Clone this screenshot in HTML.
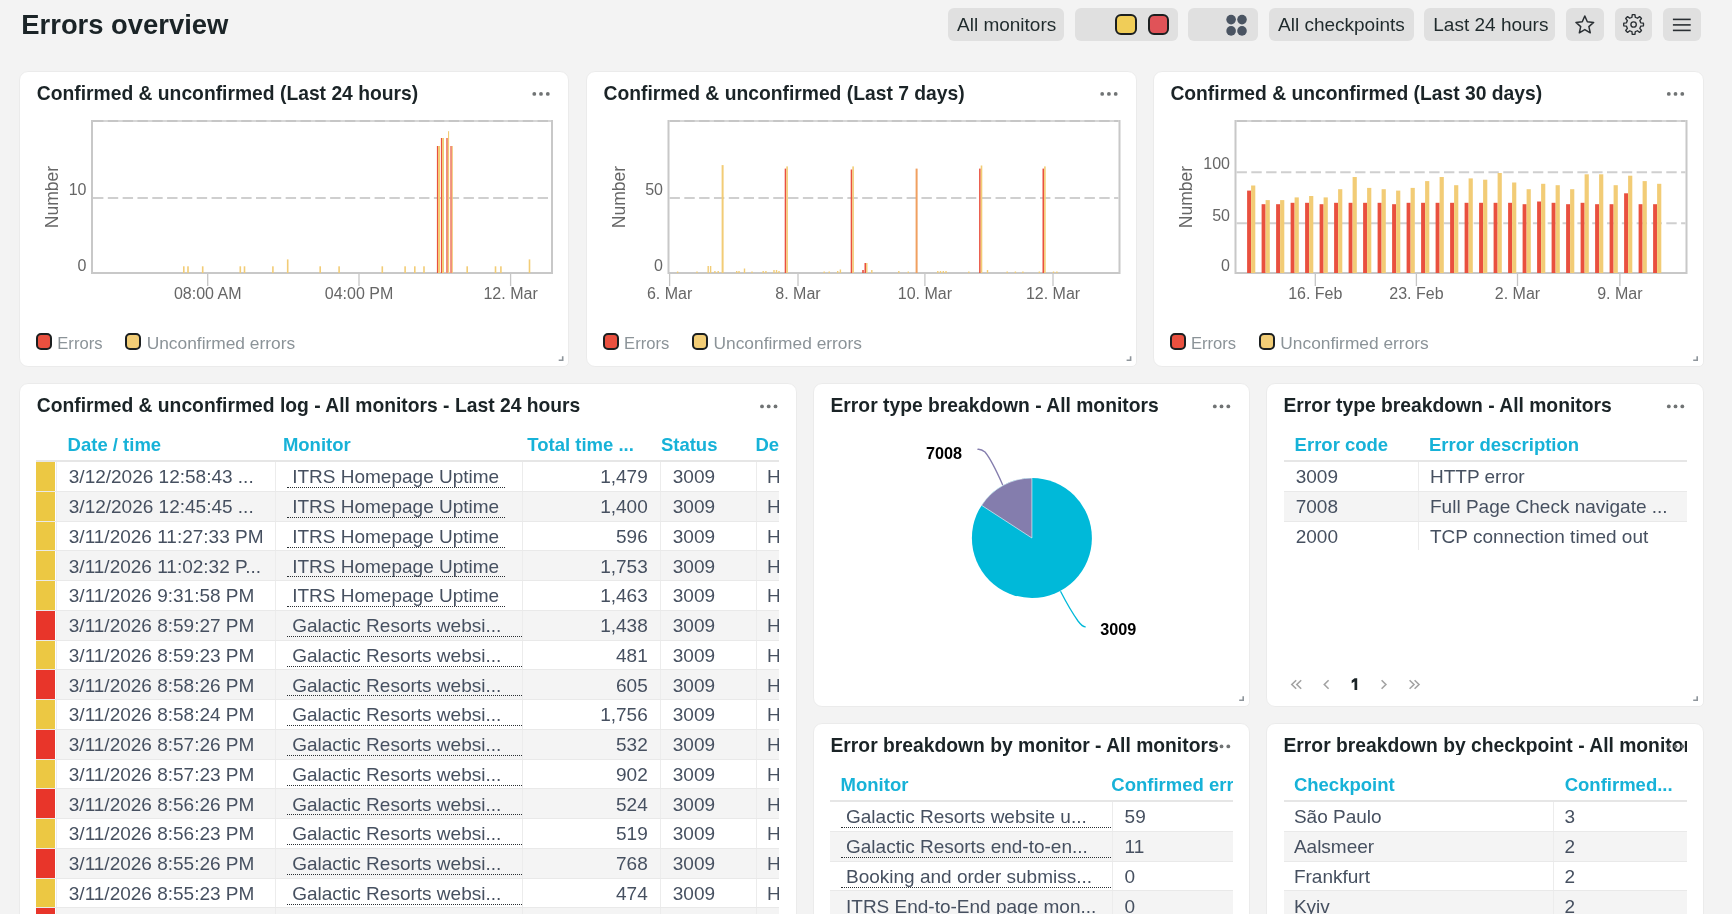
<!DOCTYPE html><html><head><meta charset="utf-8"><style>
html,body{margin:0;padding:0;}
body{width:1732px;height:914px;overflow:hidden;background:#f3f3f3;position:relative;font-family:"Liberation Sans", sans-serif;}
.t{position:absolute;white-space:nowrap;}
.r{position:absolute;}
.panel{position:absolute;background:#fff;border:1px solid #ebebeb;border-radius:9px 9px 5px 9px;box-sizing:border-box;}
.btn{position:absolute;background:#e0e0e0;border-radius:6px;}
svg{position:absolute;left:0;top:0;}

</style></head><body><div style="position:absolute;left:0;top:0;width:1732px;height:914px;overflow:hidden;will-change:transform;">
<div class="t" style="left:21.30px;top:10.80px;font-size:27.4px;line-height:27.4px;color:#1b2427;font-weight:bold;">Errors overview</div>
<div class="btn" style="left:948px;top:8px;width:116.0px;height:32.6px;"></div>
<div class="t" style="left:957.00px;top:14.91px;font-size:19px;line-height:19px;color:#1f2a2c;">All monitors</div>
<div class="btn" style="left:1075px;top:8px;width:103.0px;height:32.6px;"></div>
<div class="r" style="left:1115.3px;top:14.1px;width:21.4px;height:20.5px;box-sizing:border-box;border:2px solid #1b1f20;border-radius:6px;background:#f0cd58;"></div>
<div class="r" style="left:1148.3px;top:14.1px;width:20.7px;height:20.5px;box-sizing:border-box;border:2px solid #1b1f20;border-radius:6px;background:#e05358;"></div>
<div class="btn" style="left:1188px;top:8px;width:69.6px;height:32.6px;"></div>
<div class="btn" style="left:1269.2px;top:8px;width:144.6px;height:32.6px;"></div>
<div class="t" style="left:1278.00px;top:14.91px;font-size:19px;line-height:19px;color:#1f2a2c;">All checkpoints</div>
<div class="btn" style="left:1424.3px;top:8px;width:130.5px;height:32.6px;"></div>
<div class="t" style="left:1433.30px;top:14.91px;font-size:19px;line-height:19px;color:#1f2a2c;">Last 24 hours</div>
<div class="btn" style="left:1566px;top:8px;width:37.6px;height:32.6px;"></div>
<div class="btn" style="left:1615.2px;top:8px;width:36.6px;height:32.6px;"></div>
<div class="btn" style="left:1663.2px;top:8px;width:37.4px;height:32.6px;"></div>
<div class="panel" style="left:19.2px;top:70.7px;width:550.1px;height:296.1px;"></div>
<div class="panel" style="left:586.0px;top:70.7px;width:551.2px;height:296.1px;"></div>
<div class="panel" style="left:1152.8px;top:70.7px;width:551.0px;height:296.1px;"></div>
<div class="panel" style="left:19.2px;top:383.2px;width:777.8px;height:557.6px;"></div>
<div class="panel" style="left:812.9px;top:383.2px;width:436.9px;height:323.6px;"></div>
<div class="panel" style="left:1265.9px;top:383.2px;width:437.9px;height:323.6px;"></div>
<div class="panel" style="left:812.9px;top:723.2px;width:436.9px;height:217.6px;"></div>
<div class="panel" style="left:1265.9px;top:723.2px;width:437.9px;height:217.6px;"></div>
<div class="t" style="left:36.80px;top:83.56px;font-size:19.3px;line-height:19.3px;color:#1b2427;font-weight:bold;">Confirmed &amp; unconfirmed (Last 24 hours)</div>
<div class="t" style="left:603.60px;top:83.56px;font-size:19.3px;line-height:19.3px;color:#1b2427;font-weight:bold;">Confirmed &amp; unconfirmed (Last 7 days)</div>
<div class="t" style="left:1170.40px;top:83.56px;font-size:19.3px;line-height:19.3px;color:#1b2427;font-weight:bold;">Confirmed &amp; unconfirmed (Last 30 days)</div>
<div class="t" style="left:36.80px;top:396.06px;font-size:19.3px;line-height:19.3px;color:#1b2427;font-weight:bold;">Confirmed &amp; unconfirmed log - All monitors - Last 24 hours</div>
<div class="t" style="left:830.50px;top:396.06px;font-size:19.3px;line-height:19.3px;color:#1b2427;font-weight:bold;">Error type breakdown - All monitors</div>
<div class="t" style="left:1283.50px;top:396.06px;font-size:19.3px;line-height:19.3px;color:#1b2427;font-weight:bold;">Error type breakdown - All monitors</div>
<div class="t" style="left:830.50px;top:736.06px;font-size:19.3px;line-height:19.3px;color:#1b2427;font-weight:bold;">Error breakdown by monitor - All monitors</div>
<div class="t" style="left:1283.5px;top:736.06px;width:403.5px;overflow:hidden;font-size:19.3px;line-height:19.3px;color:#1b2427;font-weight:bold;">Error breakdown by checkpoint - All monitors</div>
<div class="r" style="left:36px;top:333px;width:16.3px;height:17px;box-sizing:border-box;border:2px solid #1b1f20;border-radius:5px;background:#e9503f;"></div>
<div class="t" style="left:57.30px;top:335.64px;font-size:16.6px;line-height:16.6px;color:#8b9398;">Errors</div>
<div class="r" style="left:125.2px;top:333px;width:16.1px;height:17px;box-sizing:border-box;border:2px solid #1b1f20;border-radius:5px;background:#f2cd76;"></div>
<div class="t" style="left:146.70px;top:335.01px;font-size:17.35px;line-height:17.35px;color:#8b9398;">Unconfirmed errors</div>
<div class="r" style="left:602.8px;top:333px;width:16.3px;height:17px;box-sizing:border-box;border:2px solid #1b1f20;border-radius:5px;background:#e9503f;"></div>
<div class="t" style="left:624.10px;top:335.64px;font-size:16.6px;line-height:16.6px;color:#8b9398;">Errors</div>
<div class="r" style="left:692.0px;top:333px;width:16.1px;height:17px;box-sizing:border-box;border:2px solid #1b1f20;border-radius:5px;background:#f2cd76;"></div>
<div class="t" style="left:713.50px;top:335.01px;font-size:17.35px;line-height:17.35px;color:#8b9398;">Unconfirmed errors</div>
<div class="r" style="left:1169.6px;top:333px;width:16.3px;height:17px;box-sizing:border-box;border:2px solid #1b1f20;border-radius:5px;background:#e9503f;"></div>
<div class="t" style="left:1190.90px;top:335.64px;font-size:16.6px;line-height:16.6px;color:#8b9398;">Errors</div>
<div class="r" style="left:1258.8px;top:333px;width:16.1px;height:17px;box-sizing:border-box;border:2px solid #1b1f20;border-radius:5px;background:#f2cd76;"></div>
<div class="t" style="left:1280.30px;top:335.01px;font-size:17.35px;line-height:17.35px;color:#8b9398;">Unconfirmed errors</div>
<svg width="1732" height="914" viewBox="0 0 1732 914"><circle cx="534.3" cy="93.9" r="1.9" fill="#707374"/>
<circle cx="541.0" cy="93.9" r="1.9" fill="#707374"/>
<circle cx="547.8" cy="93.9" r="1.9" fill="#707374"/>
<path d="M558.7 360.2 H562.7 V356.3" stroke="#8e959b" stroke-width="1.6" fill="none"/>
<circle cx="1102.2" cy="93.9" r="1.9" fill="#707374"/>
<circle cx="1108.9" cy="93.9" r="1.9" fill="#707374"/>
<circle cx="1115.7" cy="93.9" r="1.9" fill="#707374"/>
<path d="M1126.6 360.2 H1130.6 V356.3" stroke="#8e959b" stroke-width="1.6" fill="none"/>
<circle cx="1668.8" cy="93.9" r="1.9" fill="#707374"/>
<circle cx="1675.5" cy="93.9" r="1.9" fill="#707374"/>
<circle cx="1682.3" cy="93.9" r="1.9" fill="#707374"/>
<path d="M1693.2 360.2 H1697.2 V356.3" stroke="#8e959b" stroke-width="1.6" fill="none"/>
<circle cx="762.0" cy="406.4" r="1.9" fill="#707374"/>
<circle cx="768.7" cy="406.4" r="1.9" fill="#707374"/>
<circle cx="775.5" cy="406.4" r="1.9" fill="#707374"/>
<circle cx="1214.8" cy="406.4" r="1.9" fill="#707374"/>
<circle cx="1221.5" cy="406.4" r="1.9" fill="#707374"/>
<circle cx="1228.3" cy="406.4" r="1.9" fill="#707374"/>
<path d="M1239.2 700.2 H1243.2 V696.3" stroke="#8e959b" stroke-width="1.6" fill="none"/>
<circle cx="1668.8" cy="406.4" r="1.9" fill="#707374"/>
<circle cx="1675.5" cy="406.4" r="1.9" fill="#707374"/>
<circle cx="1682.3" cy="406.4" r="1.9" fill="#707374"/>
<path d="M1693.2 700.2 H1697.2 V696.3" stroke="#8e959b" stroke-width="1.6" fill="none"/>
<circle cx="1214.8" cy="746.4" r="1.9" fill="#707374"/>
<circle cx="1221.5" cy="746.4" r="1.9" fill="#707374"/>
<circle cx="1228.3" cy="746.4" r="1.9" fill="#707374"/>
<circle cx="1668.8" cy="746.4" r="1.9" fill="#707374"/>
<circle cx="1675.5" cy="746.4" r="1.9" fill="#707374"/>
<circle cx="1682.3" cy="746.4" r="1.9" fill="#707374"/>
<path d="M92 120 V273 H552 V120" fill="none" stroke="#c8c8c8" stroke-width="2"/>
<line x1="93" y1="121" x2="551" y2="121" stroke="#d6d6d6" stroke-width="2"/>
<line x1="93" y1="121" x2="551" y2="121" stroke="#c6c6c6" stroke-width="2" stroke-dasharray="10.4,4.42"/>
<line x1="93" y1="198" x2="551" y2="198" stroke="#cfcfcf" stroke-width="2" stroke-dasharray="10.4,4.42"/>
<line x1="207.7" y1="274" x2="207.7" y2="286" stroke="#c6c6c6" stroke-width="1.3"/>
<text x="207.7" y="298.8" font-size="16" fill="#666666" text-anchor="middle" font-family='"Liberation Sans", sans-serif'>08:00 AM</text>
<line x1="359" y1="274" x2="359" y2="286" stroke="#c6c6c6" stroke-width="1.3"/>
<text x="359" y="298.8" font-size="16" fill="#666666" text-anchor="middle" font-family='"Liberation Sans", sans-serif'>04:00 PM</text>
<line x1="510.6" y1="274" x2="510.6" y2="286" stroke="#c6c6c6" stroke-width="1.3"/>
<text x="510.6" y="298.8" font-size="16" fill="#666666" text-anchor="middle" font-family='"Liberation Sans", sans-serif'>12. Mar</text>
<text x="86.5" y="195.3" font-size="16" fill="#666666" text-anchor="end" font-family='"Liberation Sans", sans-serif'>10</text>
<text x="86.5" y="270.5" font-size="16" fill="#666666" text-anchor="end" font-family='"Liberation Sans", sans-serif'>0</text>
<text transform="translate(58.4,197) rotate(-90)" font-size="17.5" fill="#666666" text-anchor="middle" font-family='"Liberation Sans", sans-serif'>Number</text>
<rect x="183.0" y="266.3" width="1.6" height="6.7" fill="#f2cc76"/>
<rect x="187.2" y="266.3" width="1.6" height="6.7" fill="#f2cc76"/>
<rect x="201.9" y="266.3" width="1.6" height="6.7" fill="#f2cc76"/>
<rect x="239.5" y="266.3" width="1.6" height="6.7" fill="#f2cc76"/>
<rect x="243.7" y="266.3" width="1.6" height="6.7" fill="#f2cc76"/>
<rect x="272.1" y="266.3" width="1.6" height="6.7" fill="#f2cc76"/>
<rect x="319.4" y="266.3" width="1.6" height="6.7" fill="#f2cc76"/>
<rect x="338.3" y="266.3" width="1.6" height="6.7" fill="#f2cc76"/>
<rect x="381.5" y="266.3" width="1.6" height="6.7" fill="#f2cc76"/>
<rect x="404.3" y="266.3" width="1.6" height="6.7" fill="#f2cc76"/>
<rect x="414.0" y="266.3" width="1.6" height="6.7" fill="#f2cc76"/>
<rect x="423.2" y="266.3" width="1.6" height="6.7" fill="#f2cc76"/>
<rect x="466.4" y="266.3" width="1.6" height="6.7" fill="#f2cc76"/>
<rect x="494.7" y="266.3" width="1.6" height="6.7" fill="#f2cc76"/>
<rect x="500.1" y="266.3" width="1.6" height="6.7" fill="#f2cc76"/>
<rect x="286.9" y="259.4" width="1.6" height="13.6" fill="#f2cc76"/>
<rect x="528.7" y="259.4" width="1.6" height="13.6" fill="#f2cc76"/>
<rect x="436.9" y="146" width="1.1" height="127" fill="#e9503f"/>
<rect x="438" y="146" width="2.0" height="127" fill="#f2cc76"/>
<rect x="440.9" y="138" width="1.2" height="135" fill="#e9503f"/>
<rect x="442.1" y="138" width="1.9" height="135" fill="#f2cc76"/>
<rect x="446" y="138" width="2.0" height="135" fill="#f0907a"/>
<rect x="448" y="131.2" width="1.1" height="141.8" fill="#f2cc76"/>
<rect x="450.1" y="146" width="2.1" height="127" fill="#f0907a"/>
<rect x="452.2" y="146" width="0.8" height="127" fill="#f2cc76"/>
<path d="M668.5 120 V273 H1119.5 V120" fill="none" stroke="#c8c8c8" stroke-width="2"/>
<line x1="669.5" y1="121" x2="1118.5" y2="121" stroke="#d6d6d6" stroke-width="2"/>
<line x1="669.5" y1="121" x2="1118.5" y2="121" stroke="#c6c6c6" stroke-width="2" stroke-dasharray="10.4,4.42"/>
<line x1="669.5" y1="198" x2="1118.5" y2="198" stroke="#cfcfcf" stroke-width="2" stroke-dasharray="10.4,4.42"/>
<line x1="669.6" y1="274" x2="669.6" y2="286" stroke="#c6c6c6" stroke-width="1.3"/>
<text x="669.6" y="298.8" font-size="16" fill="#666666" text-anchor="middle" font-family='"Liberation Sans", sans-serif'>6. Mar</text>
<line x1="798" y1="274" x2="798" y2="286" stroke="#c6c6c6" stroke-width="1.3"/>
<text x="798" y="298.8" font-size="16" fill="#666666" text-anchor="middle" font-family='"Liberation Sans", sans-serif'>8. Mar</text>
<line x1="924.9" y1="274" x2="924.9" y2="286" stroke="#c6c6c6" stroke-width="1.3"/>
<text x="924.9" y="298.8" font-size="16" fill="#666666" text-anchor="middle" font-family='"Liberation Sans", sans-serif'>10. Mar</text>
<line x1="1053" y1="274" x2="1053" y2="286" stroke="#c6c6c6" stroke-width="1.3"/>
<text x="1053" y="298.8" font-size="16" fill="#666666" text-anchor="middle" font-family='"Liberation Sans", sans-serif'>12. Mar</text>
<text x="663.0" y="195.3" font-size="16" fill="#666666" text-anchor="end" font-family='"Liberation Sans", sans-serif'>50</text>
<text x="663.0" y="270.5" font-size="16" fill="#666666" text-anchor="end" font-family='"Liberation Sans", sans-serif'>0</text>
<text transform="translate(625.3,197) rotate(-90)" font-size="17.5" fill="#666666" text-anchor="middle" font-family='"Liberation Sans", sans-serif'>Number</text>
<rect x="721.6" y="165.1" width="2" height="107.9" fill="#f2cc76"/>
<rect x="784.7" y="168.6" width="1.6" height="104.4" fill="#e9503f"/>
<rect x="786.3" y="166.4" width="1.6" height="106.6" fill="#f2cc76"/>
<rect x="850.7" y="169.5" width="1.6" height="103.5" fill="#e9503f"/>
<rect x="852.3" y="166.4" width="1.6" height="106.6" fill="#f2cc76"/>
<rect x="979.1" y="168.6" width="1.6" height="104.4" fill="#e9503f"/>
<rect x="980.7" y="165.5" width="1.6" height="107.5" fill="#f2cc76"/>
<rect x="1042.5" y="168.6" width="1.6" height="104.4" fill="#e9503f"/>
<rect x="1044.1" y="166.4" width="1.6" height="106.6" fill="#f2cc76"/>
<rect x="915.6" y="168.6" width="2" height="104.4" fill="#f0a060"/>
<rect x="676.9" y="271.5" width="1.4" height="1.5" fill="#f2cc76"/>
<rect x="696.3" y="271.5" width="1.4" height="1.5" fill="#f2cc76"/>
<rect x="707.5" y="266.0" width="1.4" height="7" fill="#f2cc76"/>
<rect x="709.9" y="266.0" width="1.4" height="7" fill="#f2cc76"/>
<rect x="714.2" y="271.0" width="1.4" height="2" fill="#f2cc76"/>
<rect x="717.5" y="271.0" width="1.4" height="2" fill="#f2cc76"/>
<rect x="736.0" y="271.0" width="1.4" height="2" fill="#f2cc76"/>
<rect x="738.3" y="271.0" width="1.4" height="2" fill="#f2cc76"/>
<rect x="743.8" y="268.5" width="1.4" height="4.5" fill="#f2cc76"/>
<rect x="751.3" y="271.5" width="1.4" height="1.5" fill="#f2cc76"/>
<rect x="762.5" y="271.0" width="1.4" height="2" fill="#f2cc76"/>
<rect x="765.2" y="271.0" width="1.4" height="2" fill="#f2cc76"/>
<rect x="773.3" y="270.0" width="1.4" height="3" fill="#f2cc76"/>
<rect x="775.8" y="270.0" width="1.4" height="3" fill="#f2cc76"/>
<rect x="778.3" y="271.0" width="1.4" height="2" fill="#f2cc76"/>
<rect x="823.5" y="271.5" width="1.4" height="1.5" fill="#f2cc76"/>
<rect x="828.5" y="271.5" width="1.4" height="1.5" fill="#f2cc76"/>
<rect x="837.0" y="271.0" width="1.4" height="2" fill="#f2cc76"/>
<rect x="839.7" y="269.5" width="1.4" height="3.5" fill="#f2cc76"/>
<rect x="871.1" y="270.0" width="1.4" height="3" fill="#f2cc76"/>
<rect x="898.1" y="271.0" width="1.4" height="2" fill="#f2cc76"/>
<rect x="907.6" y="271.5" width="1.4" height="1.5" fill="#f2cc76"/>
<rect x="937.1" y="271.0" width="1.4" height="2" fill="#f2cc76"/>
<rect x="939.8" y="271.0" width="1.4" height="2" fill="#f2cc76"/>
<rect x="942.6" y="271.0" width="1.4" height="2" fill="#f2cc76"/>
<rect x="945.3" y="271.0" width="1.4" height="2" fill="#f2cc76"/>
<rect x="968.1" y="271.5" width="1.4" height="1.5" fill="#f2cc76"/>
<rect x="986.8" y="270.0" width="1.4" height="3" fill="#f2cc76"/>
<rect x="1006.5" y="271.5" width="1.4" height="1.5" fill="#f2cc76"/>
<rect x="1014.7" y="271.5" width="1.4" height="1.5" fill="#f2cc76"/>
<rect x="1022.2" y="271.5" width="1.4" height="1.5" fill="#f2cc76"/>
<rect x="1038.6" y="271.5" width="1.4" height="1.5" fill="#f2cc76"/>
<rect x="1052.8" y="271.5" width="1.4" height="1.5" fill="#f2cc76"/>
<rect x="1056.2" y="271.5" width="1.4" height="1.5" fill="#f2cc76"/>
<rect x="862.2" y="270" width="1.6" height="3" fill="#e9503f"/>
<rect x="864.5" y="263" width="1.6" height="10" fill="#e9503f"/>
<rect x="866.1" y="263" width="1.4" height="10" fill="#f2cc76"/>
<path d="M1235.5 120 V273 H1686.5 V120" fill="none" stroke="#c8c8c8" stroke-width="2"/>
<line x1="1236.5" y1="121" x2="1685.5" y2="121" stroke="#d6d6d6" stroke-width="2"/>
<line x1="1236.5" y1="121" x2="1685.5" y2="121" stroke="#c6c6c6" stroke-width="2" stroke-dasharray="10.4,4.42"/>
<line x1="1236.5" y1="172.3" x2="1685.5" y2="172.3" stroke="#cfcfcf" stroke-width="2" stroke-dasharray="10.4,4.42"/>
<line x1="1236.5" y1="223.3" x2="1685.5" y2="223.3" stroke="#cfcfcf" stroke-width="2" stroke-dasharray="10.4,4.42"/>
<line x1="1315.3" y1="274" x2="1315.3" y2="286" stroke="#c6c6c6" stroke-width="1.3"/>
<text x="1315.3" y="298.8" font-size="16" fill="#666666" text-anchor="middle" font-family='"Liberation Sans", sans-serif'>16. Feb</text>
<line x1="1416.4" y1="274" x2="1416.4" y2="286" stroke="#c6c6c6" stroke-width="1.3"/>
<text x="1416.4" y="298.8" font-size="16" fill="#666666" text-anchor="middle" font-family='"Liberation Sans", sans-serif'>23. Feb</text>
<line x1="1517.5" y1="274" x2="1517.5" y2="286" stroke="#c6c6c6" stroke-width="1.3"/>
<text x="1517.5" y="298.8" font-size="16" fill="#666666" text-anchor="middle" font-family='"Liberation Sans", sans-serif'>2. Mar</text>
<line x1="1619.9" y1="274" x2="1619.9" y2="286" stroke="#c6c6c6" stroke-width="1.3"/>
<text x="1619.9" y="298.8" font-size="16" fill="#666666" text-anchor="middle" font-family='"Liberation Sans", sans-serif'>9. Mar</text>
<text x="1230.0" y="169" font-size="16" fill="#666666" text-anchor="end" font-family='"Liberation Sans", sans-serif'>100</text>
<text x="1230.0" y="220.5" font-size="16" fill="#666666" text-anchor="end" font-family='"Liberation Sans", sans-serif'>50</text>
<text x="1230.0" y="270.5" font-size="16" fill="#666666" text-anchor="end" font-family='"Liberation Sans", sans-serif'>0</text>
<text transform="translate(1191.8,197) rotate(-90)" font-size="17.5" fill="#666666" text-anchor="middle" font-family='"Liberation Sans", sans-serif'>Number</text>
<rect x="1247.1" y="190.6" width="4" height="82.4" fill="#e9503f"/>
<rect x="1251.1" y="185.5" width="4.2" height="87.5" fill="#f2cc76"/>
<rect x="1261.6" y="204.2" width="4" height="68.8" fill="#e9503f"/>
<rect x="1265.6" y="200.1" width="4.2" height="72.9" fill="#f2cc76"/>
<rect x="1276.1" y="204.2" width="4" height="68.8" fill="#e9503f"/>
<rect x="1280.1" y="200.1" width="4.2" height="72.9" fill="#f2cc76"/>
<rect x="1290.6" y="202.8" width="4" height="70.2" fill="#e9503f"/>
<rect x="1294.6" y="197.4" width="4.2" height="75.6" fill="#f2cc76"/>
<rect x="1305.1" y="202.8" width="4" height="70.2" fill="#e9503f"/>
<rect x="1309.1" y="196" width="4.2" height="77.0" fill="#f2cc76"/>
<rect x="1319.6" y="204.2" width="4" height="68.8" fill="#e9503f"/>
<rect x="1323.6" y="197.4" width="4.2" height="75.6" fill="#f2cc76"/>
<rect x="1334.1" y="202.8" width="4" height="70.2" fill="#e9503f"/>
<rect x="1338.1" y="189.2" width="4.2" height="83.8" fill="#f2cc76"/>
<rect x="1348.6" y="202.8" width="4" height="70.2" fill="#e9503f"/>
<rect x="1352.6" y="177" width="4.2" height="96.0" fill="#f2cc76"/>
<rect x="1363.1" y="202.8" width="4" height="70.2" fill="#e9503f"/>
<rect x="1367.1" y="187.9" width="4.2" height="85.1" fill="#f2cc76"/>
<rect x="1377.6" y="202.8" width="4" height="70.2" fill="#e9503f"/>
<rect x="1381.6" y="189.2" width="4.2" height="83.8" fill="#f2cc76"/>
<rect x="1392.1" y="204.2" width="4" height="68.8" fill="#e9503f"/>
<rect x="1396.1" y="190.6" width="4.2" height="82.4" fill="#f2cc76"/>
<rect x="1406.6" y="202.8" width="4" height="70.2" fill="#e9503f"/>
<rect x="1410.6" y="187.9" width="4.2" height="85.1" fill="#f2cc76"/>
<rect x="1421.1" y="202.8" width="4" height="70.2" fill="#e9503f"/>
<rect x="1425.1" y="181.1" width="4.2" height="91.9" fill="#f2cc76"/>
<rect x="1435.6" y="202.8" width="4" height="70.2" fill="#e9503f"/>
<rect x="1439.6" y="177" width="4.2" height="96.0" fill="#f2cc76"/>
<rect x="1450.1" y="202.8" width="4" height="70.2" fill="#e9503f"/>
<rect x="1454.1" y="185.2" width="4.2" height="87.8" fill="#f2cc76"/>
<rect x="1464.6" y="202.8" width="4" height="70.2" fill="#e9503f"/>
<rect x="1468.6" y="178.4" width="4.2" height="94.6" fill="#f2cc76"/>
<rect x="1479.1" y="202.8" width="4" height="70.2" fill="#e9503f"/>
<rect x="1483.1" y="179.7" width="4.2" height="93.3" fill="#f2cc76"/>
<rect x="1493.6" y="202.8" width="4" height="70.2" fill="#e9503f"/>
<rect x="1497.6" y="173" width="4.2" height="100.0" fill="#f2cc76"/>
<rect x="1508.1" y="202.8" width="4" height="70.2" fill="#e9503f"/>
<rect x="1512.1" y="182.5" width="4.2" height="90.5" fill="#f2cc76"/>
<rect x="1522.6" y="204.2" width="4" height="68.8" fill="#e9503f"/>
<rect x="1526.6" y="189.2" width="4.2" height="83.8" fill="#f2cc76"/>
<rect x="1537.1" y="201.5" width="4" height="71.5" fill="#e9503f"/>
<rect x="1541.1" y="183.8" width="4.2" height="89.2" fill="#f2cc76"/>
<rect x="1551.6" y="202.8" width="4" height="70.2" fill="#e9503f"/>
<rect x="1555.6" y="185.2" width="4.2" height="87.8" fill="#f2cc76"/>
<rect x="1566.1" y="204.2" width="4" height="68.8" fill="#e9503f"/>
<rect x="1570.1" y="189.2" width="4.2" height="83.8" fill="#f2cc76"/>
<rect x="1580.6" y="202.8" width="4" height="70.2" fill="#e9503f"/>
<rect x="1584.6" y="174.3" width="4.2" height="98.7" fill="#f2cc76"/>
<rect x="1595.1" y="204.2" width="4" height="68.8" fill="#e9503f"/>
<rect x="1599.1" y="174.3" width="4.2" height="98.7" fill="#f2cc76"/>
<rect x="1609.6" y="204.2" width="4" height="68.8" fill="#e9503f"/>
<rect x="1613.6" y="185.2" width="4.2" height="87.8" fill="#f2cc76"/>
<rect x="1624.1" y="193.3" width="4" height="79.7" fill="#e9503f"/>
<rect x="1628.1" y="175.7" width="4.2" height="97.3" fill="#f2cc76"/>
<rect x="1638.6" y="204.2" width="4" height="68.8" fill="#e9503f"/>
<rect x="1642.6" y="181.1" width="4.2" height="91.9" fill="#f2cc76"/>
<rect x="1653.1" y="204.2" width="4" height="68.8" fill="#e9503f"/>
<rect x="1657.1" y="183.8" width="4.2" height="89.2" fill="#f2cc76"/>
<path d="M1296.2 680.2 L1291.8 684.5 L1296.2 688.8 M1301.2 680.2 L1296.8 684.5 L1301.2 688.8" stroke="#a3a3a3" stroke-width="1.6" fill="none"/>
<path d="M1328.6 680.2 L1324.3 684.5 L1328.6 688.8" stroke="#a3a3a3" stroke-width="1.6" fill="none"/>
<path d="M1381.6 680.2 L1385.9 684.5 L1381.6 688.8" stroke="#a3a3a3" stroke-width="1.6" fill="none"/>
<path d="M1409.6 680.2 L1414 684.5 L1409.6 688.8 M1414.6 680.2 L1419 684.5 L1414.6 688.8" stroke="#a3a3a3" stroke-width="1.6" fill="none"/>
<path d="M1354.6 678.2 H1357.2 V690 H1354.5 V681.6 L1351.7 683.2 V680.6 Z" fill="#1b2427"/>
<circle cx="1031.9" cy="538" r="60" fill="#00b9d9"/>
<path d="M1031.9 538 L1031.9 478 A60 60 0 0 0 981.58 505.32 Z" fill="#847dad" stroke="#fff" stroke-width="0.6"/>
<path d="M1002.7 484.9 C997 472 990 458 985 452 C982 449.5 979.5 449 977.4 449.3" stroke="#847dad" stroke-width="1.3" fill="none"/>
<path d="M1060.5 591.3 C1066 602 1073 614 1078 621 C1081 625 1084 627 1085.7 626.9" stroke="#00b9d9" stroke-width="1.3" fill="none"/>
<text x="926" y="458.6" font-size="16.2" font-weight="bold" fill="#000" font-family='"Liberation Sans", sans-serif'>7008</text>
<text x="1100.3" y="635.3" font-size="16.2" font-weight="bold" fill="#000" font-family='"Liberation Sans", sans-serif'>3009</text>
<circle cx="1231.1" cy="19.6" r="4.8" fill="#4a5462"/>
<circle cx="1242" cy="19.6" r="4.8" fill="#4a5462"/>
<circle cx="1231.1" cy="30.9" r="4.8" fill="#4a5462"/>
<circle cx="1242" cy="30.9" r="4.8" fill="#4a5462"/>
<polygon points="1584.80,16.00 1587.33,21.82 1593.64,22.43 1588.89,26.63 1590.27,32.82 1584.80,29.60 1579.33,32.82 1580.71,26.63 1575.96,22.43 1582.27,21.82" fill="none" stroke="#2a2f33" stroke-width="1.5" stroke-linejoin="round"/>
<path d="M1631.90 17.40 L1632.28 14.69 A9.9 9.9 0 0 1 1634.92 14.69 L1635.30 17.40 A7.3 7.3 0 0 1 1637.41 18.28 L1639.61 16.63 A9.9 9.9 0 0 1 1641.47 18.49 L1639.82 20.69 A7.3 7.3 0 0 1 1640.70 22.80 L1643.41 23.18 A9.9 9.9 0 0 1 1643.41 25.82 L1640.70 26.20 A7.3 7.3 0 0 1 1639.82 28.31 L1641.47 30.51 A9.9 9.9 0 0 1 1639.61 32.37 L1637.41 30.72 A7.3 7.3 0 0 1 1635.30 31.60 L1634.92 34.31 A9.9 9.9 0 0 1 1632.28 34.31 L1631.90 31.60 A7.3 7.3 0 0 1 1629.79 30.72 L1627.59 32.37 A9.9 9.9 0 0 1 1625.73 30.51 L1627.38 28.31 A7.3 7.3 0 0 1 1626.50 26.20 L1623.79 25.82 A9.9 9.9 0 0 1 1623.79 23.18 L1626.50 22.80 A7.3 7.3 0 0 1 1627.38 20.69 L1625.73 18.49 A9.9 9.9 0 0 1 1627.59 16.63 L1629.79 18.28 A7.3 7.3 0 0 1 1631.90 17.40 Z" fill="none" stroke="#2a2f33" stroke-width="1.35" stroke-linejoin="round"/>
<circle cx="1633.6" cy="24.5" r="2.7" fill="none" stroke="#2a2f33" stroke-width="1.35"/>
<line x1="1672.9" y1="19.4" x2="1690.7" y2="19.4" stroke="#2a2f33" stroke-width="1.6"/>
<line x1="1672.9" y1="24.9" x2="1690.7" y2="24.9" stroke="#2a2f33" stroke-width="1.6"/>
<line x1="1672.9" y1="30.4" x2="1690.7" y2="30.4" stroke="#2a2f33" stroke-width="1.6"/></svg>
<div class="r" style="left:36.00px;top:460.00px;width:742.80px;height:2.00px;background:#e6e6e6;"></div>
<div class="t" style="left:67.60px;top:436.34px;font-size:18.5px;line-height:18.5px;color:#17b2d8;font-weight:bold;">Date / time</div>
<div class="t" style="left:282.90px;top:436.34px;font-size:18.5px;line-height:18.5px;color:#17b2d8;font-weight:bold;">Monitor</div>
<div class="t" style="left:527.30px;top:436.34px;font-size:18.5px;line-height:18.5px;color:#17b2d8;font-weight:bold;">Total time ...</div>
<div class="t" style="left:660.90px;top:436.34px;font-size:18.5px;line-height:18.5px;color:#17b2d8;font-weight:bold;">Status</div>
<div class="t" style="left:755.5px;top:436.34px;width:23.3px;overflow:hidden;font-size:18.5px;line-height:18.5px;color:#17b2d8;font-weight:bold;">Description</div>
<div class="r" style="left:36.00px;top:490.75px;width:742.80px;height:1.00px;background:#e9e9e9;"></div>
<div class="r" style="left:36.00px;top:462.00px;width:19.00px;height:28.75px;background:#ecc843;"></div>
<div class="r" style="left:55.50px;top:462.00px;width:1.00px;height:28.75px;background:#ececec;"></div>
<div class="r" style="left:274.90px;top:462.00px;width:1.00px;height:28.75px;background:#ececec;"></div>
<div class="r" style="left:521.70px;top:462.00px;width:1.00px;height:28.75px;background:#ececec;"></div>
<div class="r" style="left:659.90px;top:462.00px;width:1.00px;height:28.75px;background:#ececec;"></div>
<div class="r" style="left:755.80px;top:462.00px;width:1.00px;height:28.75px;background:#ececec;"></div>
<div class="t" style="left:68.80px;top:467.41px;font-size:19px;line-height:19px;color:#465060;">3/12/2026 12:58:43 ...</div>
<div class="t" style="left:292.20px;top:467.41px;font-size:19px;line-height:19px;color:#465060;">ITRS Homepage Uptime</div>
<div class="r" style="left:287.2px;top:487.00px;width:217.7px;height:0;border-top:1.3px dotted #2a2f33;"></div>
<div class="t" style="right:1084.30px;top:467.41px;font-size:19px;line-height:19px;color:#465060;">1,479</div>
<div class="t" style="left:672.80px;top:467.41px;font-size:19px;line-height:19px;color:#465060;">3009</div>
<div class="t" style="left:766.9px;top:467.41px;width:11.9px;overflow:hidden;font-size:19px;line-height:19px;color:#465060;">HTTP error</div>
<div class="r" style="left:56.00px;top:491.75px;width:722.80px;height:28.75px;background:#f4f4f4;"></div>
<div class="r" style="left:36.00px;top:520.50px;width:742.80px;height:1.00px;background:#e9e9e9;"></div>
<div class="r" style="left:36.00px;top:491.75px;width:19.00px;height:28.75px;background:#ecc843;"></div>
<div class="r" style="left:55.50px;top:491.75px;width:1.00px;height:28.75px;background:#ececec;"></div>
<div class="r" style="left:274.90px;top:491.75px;width:1.00px;height:28.75px;background:#ececec;"></div>
<div class="r" style="left:521.70px;top:491.75px;width:1.00px;height:28.75px;background:#ececec;"></div>
<div class="r" style="left:659.90px;top:491.75px;width:1.00px;height:28.75px;background:#ececec;"></div>
<div class="r" style="left:755.80px;top:491.75px;width:1.00px;height:28.75px;background:#ececec;"></div>
<div class="t" style="left:68.80px;top:497.16px;font-size:19px;line-height:19px;color:#465060;">3/12/2026 12:45:45 ...</div>
<div class="t" style="left:292.20px;top:497.16px;font-size:19px;line-height:19px;color:#465060;">ITRS Homepage Uptime</div>
<div class="r" style="left:287.2px;top:516.75px;width:217.7px;height:0;border-top:1.3px dotted #2a2f33;"></div>
<div class="t" style="right:1084.30px;top:497.16px;font-size:19px;line-height:19px;color:#465060;">1,400</div>
<div class="t" style="left:672.80px;top:497.16px;font-size:19px;line-height:19px;color:#465060;">3009</div>
<div class="t" style="left:766.9px;top:497.16px;width:11.9px;overflow:hidden;font-size:19px;line-height:19px;color:#465060;">HTTP error</div>
<div class="r" style="left:36.00px;top:550.25px;width:742.80px;height:1.00px;background:#e9e9e9;"></div>
<div class="r" style="left:36.00px;top:521.50px;width:19.00px;height:28.75px;background:#ecc843;"></div>
<div class="r" style="left:55.50px;top:521.50px;width:1.00px;height:28.75px;background:#ececec;"></div>
<div class="r" style="left:274.90px;top:521.50px;width:1.00px;height:28.75px;background:#ececec;"></div>
<div class="r" style="left:521.70px;top:521.50px;width:1.00px;height:28.75px;background:#ececec;"></div>
<div class="r" style="left:659.90px;top:521.50px;width:1.00px;height:28.75px;background:#ececec;"></div>
<div class="r" style="left:755.80px;top:521.50px;width:1.00px;height:28.75px;background:#ececec;"></div>
<div class="t" style="left:68.80px;top:526.91px;font-size:19px;line-height:19px;color:#465060;">3/11/2026 11:27:33 PM</div>
<div class="t" style="left:292.20px;top:526.91px;font-size:19px;line-height:19px;color:#465060;">ITRS Homepage Uptime</div>
<div class="r" style="left:287.2px;top:546.50px;width:217.7px;height:0;border-top:1.3px dotted #2a2f33;"></div>
<div class="t" style="right:1084.30px;top:526.91px;font-size:19px;line-height:19px;color:#465060;">596</div>
<div class="t" style="left:672.80px;top:526.91px;font-size:19px;line-height:19px;color:#465060;">3009</div>
<div class="t" style="left:766.9px;top:526.91px;width:11.9px;overflow:hidden;font-size:19px;line-height:19px;color:#465060;">HTTP error</div>
<div class="r" style="left:56.00px;top:551.25px;width:722.80px;height:28.75px;background:#f4f4f4;"></div>
<div class="r" style="left:36.00px;top:580.00px;width:742.80px;height:1.00px;background:#e9e9e9;"></div>
<div class="r" style="left:36.00px;top:551.25px;width:19.00px;height:28.75px;background:#ecc843;"></div>
<div class="r" style="left:55.50px;top:551.25px;width:1.00px;height:28.75px;background:#ececec;"></div>
<div class="r" style="left:274.90px;top:551.25px;width:1.00px;height:28.75px;background:#ececec;"></div>
<div class="r" style="left:521.70px;top:551.25px;width:1.00px;height:28.75px;background:#ececec;"></div>
<div class="r" style="left:659.90px;top:551.25px;width:1.00px;height:28.75px;background:#ececec;"></div>
<div class="r" style="left:755.80px;top:551.25px;width:1.00px;height:28.75px;background:#ececec;"></div>
<div class="t" style="left:68.80px;top:556.66px;font-size:19px;line-height:19px;color:#465060;">3/11/2026 11:02:32 P...</div>
<div class="t" style="left:292.20px;top:556.66px;font-size:19px;line-height:19px;color:#465060;">ITRS Homepage Uptime</div>
<div class="r" style="left:287.2px;top:576.25px;width:217.7px;height:0;border-top:1.3px dotted #2a2f33;"></div>
<div class="t" style="right:1084.30px;top:556.66px;font-size:19px;line-height:19px;color:#465060;">1,753</div>
<div class="t" style="left:672.80px;top:556.66px;font-size:19px;line-height:19px;color:#465060;">3009</div>
<div class="t" style="left:766.9px;top:556.66px;width:11.9px;overflow:hidden;font-size:19px;line-height:19px;color:#465060;">HTTP error</div>
<div class="r" style="left:36.00px;top:609.75px;width:742.80px;height:1.00px;background:#e9e9e9;"></div>
<div class="r" style="left:36.00px;top:581.00px;width:19.00px;height:28.75px;background:#ecc843;"></div>
<div class="r" style="left:55.50px;top:581.00px;width:1.00px;height:28.75px;background:#ececec;"></div>
<div class="r" style="left:274.90px;top:581.00px;width:1.00px;height:28.75px;background:#ececec;"></div>
<div class="r" style="left:521.70px;top:581.00px;width:1.00px;height:28.75px;background:#ececec;"></div>
<div class="r" style="left:659.90px;top:581.00px;width:1.00px;height:28.75px;background:#ececec;"></div>
<div class="r" style="left:755.80px;top:581.00px;width:1.00px;height:28.75px;background:#ececec;"></div>
<div class="t" style="left:68.80px;top:586.41px;font-size:19px;line-height:19px;color:#465060;">3/11/2026 9:31:58 PM</div>
<div class="t" style="left:292.20px;top:586.41px;font-size:19px;line-height:19px;color:#465060;">ITRS Homepage Uptime</div>
<div class="r" style="left:287.2px;top:606.00px;width:217.7px;height:0;border-top:1.3px dotted #2a2f33;"></div>
<div class="t" style="right:1084.30px;top:586.41px;font-size:19px;line-height:19px;color:#465060;">1,463</div>
<div class="t" style="left:672.80px;top:586.41px;font-size:19px;line-height:19px;color:#465060;">3009</div>
<div class="t" style="left:766.9px;top:586.41px;width:11.9px;overflow:hidden;font-size:19px;line-height:19px;color:#465060;">HTTP error</div>
<div class="r" style="left:56.00px;top:610.75px;width:722.80px;height:28.75px;background:#f4f4f4;"></div>
<div class="r" style="left:36.00px;top:639.50px;width:742.80px;height:1.00px;background:#e9e9e9;"></div>
<div class="r" style="left:36.00px;top:610.75px;width:19.00px;height:28.75px;background:#e8352a;"></div>
<div class="r" style="left:55.50px;top:610.75px;width:1.00px;height:28.75px;background:#ececec;"></div>
<div class="r" style="left:274.90px;top:610.75px;width:1.00px;height:28.75px;background:#ececec;"></div>
<div class="r" style="left:521.70px;top:610.75px;width:1.00px;height:28.75px;background:#ececec;"></div>
<div class="r" style="left:659.90px;top:610.75px;width:1.00px;height:28.75px;background:#ececec;"></div>
<div class="r" style="left:755.80px;top:610.75px;width:1.00px;height:28.75px;background:#ececec;"></div>
<div class="t" style="left:68.80px;top:616.16px;font-size:19px;line-height:19px;color:#465060;">3/11/2026 8:59:27 PM</div>
<div class="t" style="left:292.20px;top:616.16px;font-size:19px;line-height:19px;color:#465060;">Galactic Resorts websi...</div>
<div class="r" style="left:287.2px;top:635.75px;width:234.8px;height:0;border-top:1.3px dotted #2a2f33;"></div>
<div class="t" style="right:1084.30px;top:616.16px;font-size:19px;line-height:19px;color:#465060;">1,438</div>
<div class="t" style="left:672.80px;top:616.16px;font-size:19px;line-height:19px;color:#465060;">3009</div>
<div class="t" style="left:766.9px;top:616.16px;width:11.9px;overflow:hidden;font-size:19px;line-height:19px;color:#465060;">HTTP error</div>
<div class="r" style="left:36.00px;top:669.25px;width:742.80px;height:1.00px;background:#e9e9e9;"></div>
<div class="r" style="left:36.00px;top:640.50px;width:19.00px;height:28.75px;background:#ecc843;"></div>
<div class="r" style="left:55.50px;top:640.50px;width:1.00px;height:28.75px;background:#ececec;"></div>
<div class="r" style="left:274.90px;top:640.50px;width:1.00px;height:28.75px;background:#ececec;"></div>
<div class="r" style="left:521.70px;top:640.50px;width:1.00px;height:28.75px;background:#ececec;"></div>
<div class="r" style="left:659.90px;top:640.50px;width:1.00px;height:28.75px;background:#ececec;"></div>
<div class="r" style="left:755.80px;top:640.50px;width:1.00px;height:28.75px;background:#ececec;"></div>
<div class="t" style="left:68.80px;top:645.91px;font-size:19px;line-height:19px;color:#465060;">3/11/2026 8:59:23 PM</div>
<div class="t" style="left:292.20px;top:645.91px;font-size:19px;line-height:19px;color:#465060;">Galactic Resorts websi...</div>
<div class="r" style="left:287.2px;top:665.50px;width:234.8px;height:0;border-top:1.3px dotted #2a2f33;"></div>
<div class="t" style="right:1084.30px;top:645.91px;font-size:19px;line-height:19px;color:#465060;">481</div>
<div class="t" style="left:672.80px;top:645.91px;font-size:19px;line-height:19px;color:#465060;">3009</div>
<div class="t" style="left:766.9px;top:645.91px;width:11.9px;overflow:hidden;font-size:19px;line-height:19px;color:#465060;">HTTP error</div>
<div class="r" style="left:56.00px;top:670.25px;width:722.80px;height:28.75px;background:#f4f4f4;"></div>
<div class="r" style="left:36.00px;top:699.00px;width:742.80px;height:1.00px;background:#e9e9e9;"></div>
<div class="r" style="left:36.00px;top:670.25px;width:19.00px;height:28.75px;background:#e8352a;"></div>
<div class="r" style="left:55.50px;top:670.25px;width:1.00px;height:28.75px;background:#ececec;"></div>
<div class="r" style="left:274.90px;top:670.25px;width:1.00px;height:28.75px;background:#ececec;"></div>
<div class="r" style="left:521.70px;top:670.25px;width:1.00px;height:28.75px;background:#ececec;"></div>
<div class="r" style="left:659.90px;top:670.25px;width:1.00px;height:28.75px;background:#ececec;"></div>
<div class="r" style="left:755.80px;top:670.25px;width:1.00px;height:28.75px;background:#ececec;"></div>
<div class="t" style="left:68.80px;top:675.66px;font-size:19px;line-height:19px;color:#465060;">3/11/2026 8:58:26 PM</div>
<div class="t" style="left:292.20px;top:675.66px;font-size:19px;line-height:19px;color:#465060;">Galactic Resorts websi...</div>
<div class="r" style="left:287.2px;top:695.25px;width:234.8px;height:0;border-top:1.3px dotted #2a2f33;"></div>
<div class="t" style="right:1084.30px;top:675.66px;font-size:19px;line-height:19px;color:#465060;">605</div>
<div class="t" style="left:672.80px;top:675.66px;font-size:19px;line-height:19px;color:#465060;">3009</div>
<div class="t" style="left:766.9px;top:675.66px;width:11.9px;overflow:hidden;font-size:19px;line-height:19px;color:#465060;">HTTP error</div>
<div class="r" style="left:36.00px;top:728.75px;width:742.80px;height:1.00px;background:#e9e9e9;"></div>
<div class="r" style="left:36.00px;top:700.00px;width:19.00px;height:28.75px;background:#ecc843;"></div>
<div class="r" style="left:55.50px;top:700.00px;width:1.00px;height:28.75px;background:#ececec;"></div>
<div class="r" style="left:274.90px;top:700.00px;width:1.00px;height:28.75px;background:#ececec;"></div>
<div class="r" style="left:521.70px;top:700.00px;width:1.00px;height:28.75px;background:#ececec;"></div>
<div class="r" style="left:659.90px;top:700.00px;width:1.00px;height:28.75px;background:#ececec;"></div>
<div class="r" style="left:755.80px;top:700.00px;width:1.00px;height:28.75px;background:#ececec;"></div>
<div class="t" style="left:68.80px;top:705.41px;font-size:19px;line-height:19px;color:#465060;">3/11/2026 8:58:24 PM</div>
<div class="t" style="left:292.20px;top:705.41px;font-size:19px;line-height:19px;color:#465060;">Galactic Resorts websi...</div>
<div class="r" style="left:287.2px;top:725.00px;width:234.8px;height:0;border-top:1.3px dotted #2a2f33;"></div>
<div class="t" style="right:1084.30px;top:705.41px;font-size:19px;line-height:19px;color:#465060;">1,756</div>
<div class="t" style="left:672.80px;top:705.41px;font-size:19px;line-height:19px;color:#465060;">3009</div>
<div class="t" style="left:766.9px;top:705.41px;width:11.9px;overflow:hidden;font-size:19px;line-height:19px;color:#465060;">HTTP error</div>
<div class="r" style="left:56.00px;top:729.75px;width:722.80px;height:28.75px;background:#f4f4f4;"></div>
<div class="r" style="left:36.00px;top:758.50px;width:742.80px;height:1.00px;background:#e9e9e9;"></div>
<div class="r" style="left:36.00px;top:729.75px;width:19.00px;height:28.75px;background:#e8352a;"></div>
<div class="r" style="left:55.50px;top:729.75px;width:1.00px;height:28.75px;background:#ececec;"></div>
<div class="r" style="left:274.90px;top:729.75px;width:1.00px;height:28.75px;background:#ececec;"></div>
<div class="r" style="left:521.70px;top:729.75px;width:1.00px;height:28.75px;background:#ececec;"></div>
<div class="r" style="left:659.90px;top:729.75px;width:1.00px;height:28.75px;background:#ececec;"></div>
<div class="r" style="left:755.80px;top:729.75px;width:1.00px;height:28.75px;background:#ececec;"></div>
<div class="t" style="left:68.80px;top:735.16px;font-size:19px;line-height:19px;color:#465060;">3/11/2026 8:57:26 PM</div>
<div class="t" style="left:292.20px;top:735.16px;font-size:19px;line-height:19px;color:#465060;">Galactic Resorts websi...</div>
<div class="r" style="left:287.2px;top:754.75px;width:234.8px;height:0;border-top:1.3px dotted #2a2f33;"></div>
<div class="t" style="right:1084.30px;top:735.16px;font-size:19px;line-height:19px;color:#465060;">532</div>
<div class="t" style="left:672.80px;top:735.16px;font-size:19px;line-height:19px;color:#465060;">3009</div>
<div class="t" style="left:766.9px;top:735.16px;width:11.9px;overflow:hidden;font-size:19px;line-height:19px;color:#465060;">HTTP error</div>
<div class="r" style="left:36.00px;top:788.25px;width:742.80px;height:1.00px;background:#e9e9e9;"></div>
<div class="r" style="left:36.00px;top:759.50px;width:19.00px;height:28.75px;background:#ecc843;"></div>
<div class="r" style="left:55.50px;top:759.50px;width:1.00px;height:28.75px;background:#ececec;"></div>
<div class="r" style="left:274.90px;top:759.50px;width:1.00px;height:28.75px;background:#ececec;"></div>
<div class="r" style="left:521.70px;top:759.50px;width:1.00px;height:28.75px;background:#ececec;"></div>
<div class="r" style="left:659.90px;top:759.50px;width:1.00px;height:28.75px;background:#ececec;"></div>
<div class="r" style="left:755.80px;top:759.50px;width:1.00px;height:28.75px;background:#ececec;"></div>
<div class="t" style="left:68.80px;top:764.91px;font-size:19px;line-height:19px;color:#465060;">3/11/2026 8:57:23 PM</div>
<div class="t" style="left:292.20px;top:764.91px;font-size:19px;line-height:19px;color:#465060;">Galactic Resorts websi...</div>
<div class="r" style="left:287.2px;top:784.50px;width:234.8px;height:0;border-top:1.3px dotted #2a2f33;"></div>
<div class="t" style="right:1084.30px;top:764.91px;font-size:19px;line-height:19px;color:#465060;">902</div>
<div class="t" style="left:672.80px;top:764.91px;font-size:19px;line-height:19px;color:#465060;">3009</div>
<div class="t" style="left:766.9px;top:764.91px;width:11.9px;overflow:hidden;font-size:19px;line-height:19px;color:#465060;">HTTP error</div>
<div class="r" style="left:56.00px;top:789.25px;width:722.80px;height:28.75px;background:#f4f4f4;"></div>
<div class="r" style="left:36.00px;top:818.00px;width:742.80px;height:1.00px;background:#e9e9e9;"></div>
<div class="r" style="left:36.00px;top:789.25px;width:19.00px;height:28.75px;background:#e8352a;"></div>
<div class="r" style="left:55.50px;top:789.25px;width:1.00px;height:28.75px;background:#ececec;"></div>
<div class="r" style="left:274.90px;top:789.25px;width:1.00px;height:28.75px;background:#ececec;"></div>
<div class="r" style="left:521.70px;top:789.25px;width:1.00px;height:28.75px;background:#ececec;"></div>
<div class="r" style="left:659.90px;top:789.25px;width:1.00px;height:28.75px;background:#ececec;"></div>
<div class="r" style="left:755.80px;top:789.25px;width:1.00px;height:28.75px;background:#ececec;"></div>
<div class="t" style="left:68.80px;top:794.66px;font-size:19px;line-height:19px;color:#465060;">3/11/2026 8:56:26 PM</div>
<div class="t" style="left:292.20px;top:794.66px;font-size:19px;line-height:19px;color:#465060;">Galactic Resorts websi...</div>
<div class="r" style="left:287.2px;top:814.25px;width:234.8px;height:0;border-top:1.3px dotted #2a2f33;"></div>
<div class="t" style="right:1084.30px;top:794.66px;font-size:19px;line-height:19px;color:#465060;">524</div>
<div class="t" style="left:672.80px;top:794.66px;font-size:19px;line-height:19px;color:#465060;">3009</div>
<div class="t" style="left:766.9px;top:794.66px;width:11.9px;overflow:hidden;font-size:19px;line-height:19px;color:#465060;">HTTP error</div>
<div class="r" style="left:36.00px;top:847.75px;width:742.80px;height:1.00px;background:#e9e9e9;"></div>
<div class="r" style="left:36.00px;top:819.00px;width:19.00px;height:28.75px;background:#ecc843;"></div>
<div class="r" style="left:55.50px;top:819.00px;width:1.00px;height:28.75px;background:#ececec;"></div>
<div class="r" style="left:274.90px;top:819.00px;width:1.00px;height:28.75px;background:#ececec;"></div>
<div class="r" style="left:521.70px;top:819.00px;width:1.00px;height:28.75px;background:#ececec;"></div>
<div class="r" style="left:659.90px;top:819.00px;width:1.00px;height:28.75px;background:#ececec;"></div>
<div class="r" style="left:755.80px;top:819.00px;width:1.00px;height:28.75px;background:#ececec;"></div>
<div class="t" style="left:68.80px;top:824.41px;font-size:19px;line-height:19px;color:#465060;">3/11/2026 8:56:23 PM</div>
<div class="t" style="left:292.20px;top:824.41px;font-size:19px;line-height:19px;color:#465060;">Galactic Resorts websi...</div>
<div class="r" style="left:287.2px;top:844.00px;width:234.8px;height:0;border-top:1.3px dotted #2a2f33;"></div>
<div class="t" style="right:1084.30px;top:824.41px;font-size:19px;line-height:19px;color:#465060;">519</div>
<div class="t" style="left:672.80px;top:824.41px;font-size:19px;line-height:19px;color:#465060;">3009</div>
<div class="t" style="left:766.9px;top:824.41px;width:11.9px;overflow:hidden;font-size:19px;line-height:19px;color:#465060;">HTTP error</div>
<div class="r" style="left:56.00px;top:848.75px;width:722.80px;height:28.75px;background:#f4f4f4;"></div>
<div class="r" style="left:36.00px;top:877.50px;width:742.80px;height:1.00px;background:#e9e9e9;"></div>
<div class="r" style="left:36.00px;top:848.75px;width:19.00px;height:28.75px;background:#e8352a;"></div>
<div class="r" style="left:55.50px;top:848.75px;width:1.00px;height:28.75px;background:#ececec;"></div>
<div class="r" style="left:274.90px;top:848.75px;width:1.00px;height:28.75px;background:#ececec;"></div>
<div class="r" style="left:521.70px;top:848.75px;width:1.00px;height:28.75px;background:#ececec;"></div>
<div class="r" style="left:659.90px;top:848.75px;width:1.00px;height:28.75px;background:#ececec;"></div>
<div class="r" style="left:755.80px;top:848.75px;width:1.00px;height:28.75px;background:#ececec;"></div>
<div class="t" style="left:68.80px;top:854.16px;font-size:19px;line-height:19px;color:#465060;">3/11/2026 8:55:26 PM</div>
<div class="t" style="left:292.20px;top:854.16px;font-size:19px;line-height:19px;color:#465060;">Galactic Resorts websi...</div>
<div class="r" style="left:287.2px;top:873.75px;width:234.8px;height:0;border-top:1.3px dotted #2a2f33;"></div>
<div class="t" style="right:1084.30px;top:854.16px;font-size:19px;line-height:19px;color:#465060;">768</div>
<div class="t" style="left:672.80px;top:854.16px;font-size:19px;line-height:19px;color:#465060;">3009</div>
<div class="t" style="left:766.9px;top:854.16px;width:11.9px;overflow:hidden;font-size:19px;line-height:19px;color:#465060;">HTTP error</div>
<div class="r" style="left:36.00px;top:907.25px;width:742.80px;height:1.00px;background:#e9e9e9;"></div>
<div class="r" style="left:36.00px;top:878.50px;width:19.00px;height:28.75px;background:#ecc843;"></div>
<div class="r" style="left:55.50px;top:878.50px;width:1.00px;height:28.75px;background:#ececec;"></div>
<div class="r" style="left:274.90px;top:878.50px;width:1.00px;height:28.75px;background:#ececec;"></div>
<div class="r" style="left:521.70px;top:878.50px;width:1.00px;height:28.75px;background:#ececec;"></div>
<div class="r" style="left:659.90px;top:878.50px;width:1.00px;height:28.75px;background:#ececec;"></div>
<div class="r" style="left:755.80px;top:878.50px;width:1.00px;height:28.75px;background:#ececec;"></div>
<div class="t" style="left:68.80px;top:883.91px;font-size:19px;line-height:19px;color:#465060;">3/11/2026 8:55:23 PM</div>
<div class="t" style="left:292.20px;top:883.91px;font-size:19px;line-height:19px;color:#465060;">Galactic Resorts websi...</div>
<div class="r" style="left:287.2px;top:903.50px;width:234.8px;height:0;border-top:1.3px dotted #2a2f33;"></div>
<div class="t" style="right:1084.30px;top:883.91px;font-size:19px;line-height:19px;color:#465060;">474</div>
<div class="t" style="left:672.80px;top:883.91px;font-size:19px;line-height:19px;color:#465060;">3009</div>
<div class="t" style="left:766.9px;top:883.91px;width:11.9px;overflow:hidden;font-size:19px;line-height:19px;color:#465060;">HTTP error</div>
<div class="r" style="left:56.00px;top:908.25px;width:722.80px;height:28.75px;background:#f4f4f4;"></div>
<div class="r" style="left:36.00px;top:937.00px;width:742.80px;height:1.00px;background:#e9e9e9;"></div>
<div class="r" style="left:36.00px;top:908.25px;width:19.00px;height:28.75px;background:#e8352a;"></div>
<div class="r" style="left:55.50px;top:908.25px;width:1.00px;height:28.75px;background:#ececec;"></div>
<div class="r" style="left:274.90px;top:908.25px;width:1.00px;height:28.75px;background:#ececec;"></div>
<div class="r" style="left:521.70px;top:908.25px;width:1.00px;height:28.75px;background:#ececec;"></div>
<div class="r" style="left:659.90px;top:908.25px;width:1.00px;height:28.75px;background:#ececec;"></div>
<div class="r" style="left:755.80px;top:908.25px;width:1.00px;height:28.75px;background:#ececec;"></div>
<div class="r" style="left:1284.00px;top:460.00px;width:403.00px;height:2.00px;background:#e6e6e6;"></div>
<div class="t" style="left:1294.60px;top:436.34px;font-size:18.5px;line-height:18.5px;color:#17b2d8;font-weight:bold;">Error code</div>
<div class="t" style="left:1429.00px;top:436.34px;font-size:18.5px;line-height:18.5px;color:#17b2d8;font-weight:bold;">Error description</div>
<div class="r" style="left:1284.00px;top:490.75px;width:403.00px;height:1.00px;background:#e9e9e9;"></div>
<div class="r" style="left:1417.70px;top:462.00px;width:1.00px;height:28.75px;background:#ececec;"></div>
<div class="t" style="left:1295.70px;top:467.41px;font-size:19px;line-height:19px;color:#465060;">3009</div>
<div class="t" style="left:1430.00px;top:467.41px;font-size:19px;line-height:19px;color:#465060;">HTTP error</div>
<div class="r" style="left:1284.00px;top:491.75px;width:403.00px;height:28.75px;background:#f4f4f4;"></div>
<div class="r" style="left:1284.00px;top:520.50px;width:403.00px;height:1.00px;background:#e9e9e9;"></div>
<div class="r" style="left:1417.70px;top:491.75px;width:1.00px;height:28.75px;background:#ececec;"></div>
<div class="t" style="left:1295.70px;top:497.16px;font-size:19px;line-height:19px;color:#465060;">7008</div>
<div class="t" style="left:1430.00px;top:497.16px;font-size:19px;line-height:19px;color:#465060;">Full Page Check navigate ...</div>
<div class="r" style="left:1417.70px;top:521.50px;width:1.00px;height:28.75px;background:#ececec;"></div>
<div class="t" style="left:1295.70px;top:526.91px;font-size:19px;line-height:19px;color:#465060;">2000</div>
<div class="t" style="left:1430.00px;top:526.91px;font-size:19px;line-height:19px;color:#465060;">TCP connection timed out</div>
<div class="r" style="left:830.00px;top:800.00px;width:403.00px;height:2.00px;background:#e6e6e6;"></div>
<div class="t" style="left:840.60px;top:776.34px;font-size:18.5px;line-height:18.5px;color:#17b2d8;font-weight:bold;">Monitor</div>
<div class="t" style="left:1111.3px;top:776.34px;width:121.7px;overflow:hidden;font-size:18.5px;line-height:18.5px;color:#17b2d8;font-weight:bold;">Confirmed errors</div>
<div class="r" style="left:830.00px;top:830.75px;width:403.00px;height:1.00px;background:#e9e9e9;"></div>
<div class="r" style="left:1112.10px;top:802.00px;width:1.00px;height:28.75px;background:#ececec;"></div>
<div class="t" style="left:846.00px;top:807.41px;font-size:19px;line-height:19px;color:#465060;">Galactic Resorts website u...</div>
<div class="r" style="left:841.2px;top:827.00px;width:270px;height:0;border-top:1.3px dotted #2a2f33;"></div>
<div class="t" style="left:1124.60px;top:807.41px;font-size:19px;line-height:19px;color:#465060;">59</div>
<div class="r" style="left:830.00px;top:831.75px;width:403.00px;height:28.75px;background:#f4f4f4;"></div>
<div class="r" style="left:830.00px;top:860.50px;width:403.00px;height:1.00px;background:#e9e9e9;"></div>
<div class="r" style="left:1112.10px;top:831.75px;width:1.00px;height:28.75px;background:#ececec;"></div>
<div class="t" style="left:846.00px;top:837.16px;font-size:19px;line-height:19px;color:#465060;">Galactic Resorts end-to-en...</div>
<div class="r" style="left:841.2px;top:856.75px;width:270px;height:0;border-top:1.3px dotted #2a2f33;"></div>
<div class="t" style="left:1124.60px;top:837.16px;font-size:19px;line-height:19px;color:#465060;">11</div>
<div class="r" style="left:830.00px;top:890.25px;width:403.00px;height:1.00px;background:#e9e9e9;"></div>
<div class="r" style="left:1112.10px;top:861.50px;width:1.00px;height:28.75px;background:#ececec;"></div>
<div class="t" style="left:846.00px;top:866.91px;font-size:19px;line-height:19px;color:#465060;">Booking and order submiss...</div>
<div class="r" style="left:841.2px;top:886.50px;width:270px;height:0;border-top:1.3px dotted #2a2f33;"></div>
<div class="t" style="left:1124.60px;top:866.91px;font-size:19px;line-height:19px;color:#465060;">0</div>
<div class="r" style="left:830.00px;top:891.25px;width:403.00px;height:28.75px;background:#f4f4f4;"></div>
<div class="r" style="left:830.00px;top:920.00px;width:403.00px;height:1.00px;background:#e9e9e9;"></div>
<div class="r" style="left:1112.10px;top:891.25px;width:1.00px;height:28.75px;background:#ececec;"></div>
<div class="t" style="left:846.00px;top:896.66px;font-size:19px;line-height:19px;color:#465060;">ITRS End-to-End page mon...</div>
<div class="r" style="left:841.2px;top:916.25px;width:270px;height:0;border-top:1.3px dotted #2a2f33;"></div>
<div class="t" style="left:1124.60px;top:896.66px;font-size:19px;line-height:19px;color:#465060;">0</div>
<div class="r" style="left:1284.00px;top:800.00px;width:403.00px;height:2.00px;background:#e6e6e6;"></div>
<div class="t" style="left:1293.90px;top:776.34px;font-size:18.5px;line-height:18.5px;color:#17b2d8;font-weight:bold;">Checkpoint</div>
<div class="t" style="left:1564.70px;top:776.34px;font-size:18.5px;line-height:18.5px;color:#17b2d8;font-weight:bold;">Confirmed...</div>
<div class="r" style="left:1284.00px;top:830.75px;width:403.00px;height:1.00px;background:#e9e9e9;"></div>
<div class="r" style="left:1553.00px;top:802.00px;width:1.00px;height:28.75px;background:#ececec;"></div>
<div class="t" style="left:1293.90px;top:807.41px;font-size:19px;line-height:19px;color:#465060;">São Paulo</div>
<div class="t" style="left:1564.60px;top:807.41px;font-size:19px;line-height:19px;color:#465060;">3</div>
<div class="r" style="left:1284.00px;top:831.75px;width:403.00px;height:28.75px;background:#f4f4f4;"></div>
<div class="r" style="left:1284.00px;top:860.50px;width:403.00px;height:1.00px;background:#e9e9e9;"></div>
<div class="r" style="left:1553.00px;top:831.75px;width:1.00px;height:28.75px;background:#ececec;"></div>
<div class="t" style="left:1293.90px;top:837.16px;font-size:19px;line-height:19px;color:#465060;">Aalsmeer</div>
<div class="t" style="left:1564.60px;top:837.16px;font-size:19px;line-height:19px;color:#465060;">2</div>
<div class="r" style="left:1284.00px;top:890.25px;width:403.00px;height:1.00px;background:#e9e9e9;"></div>
<div class="r" style="left:1553.00px;top:861.50px;width:1.00px;height:28.75px;background:#ececec;"></div>
<div class="t" style="left:1293.90px;top:866.91px;font-size:19px;line-height:19px;color:#465060;">Frankfurt</div>
<div class="t" style="left:1564.60px;top:866.91px;font-size:19px;line-height:19px;color:#465060;">2</div>
<div class="r" style="left:1284.00px;top:891.25px;width:403.00px;height:28.75px;background:#f4f4f4;"></div>
<div class="r" style="left:1284.00px;top:920.00px;width:403.00px;height:1.00px;background:#e9e9e9;"></div>
<div class="r" style="left:1553.00px;top:891.25px;width:1.00px;height:28.75px;background:#ececec;"></div>
<div class="t" style="left:1293.90px;top:896.66px;font-size:19px;line-height:19px;color:#465060;">Kyiv</div>
<div class="t" style="left:1564.60px;top:896.66px;font-size:19px;line-height:19px;color:#465060;">2</div>
</div></body></html>
